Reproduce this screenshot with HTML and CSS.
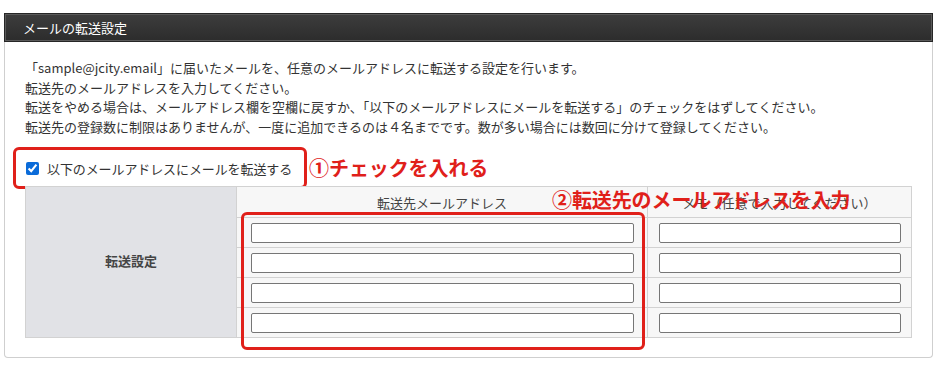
FILE: index.html
```html
<!DOCTYPE html>
<html lang="ja">
<head>
<meta charset="utf-8">
<title>メールの転送設定</title>
<link rel="stylesheet" href="styles.css">
</head>
<body>
<div class="page">
  <section class="panel">
    <div class="panel-head">メールの転送設定</div>
    <div class="panel-body">
      <p class="intro">「sample@jcity.email」に届いたメールを、任意のメールアドレスに転送する設定を行います。<br>転送先のメールアドレスを入力してください。<br>転送をやめる場合は、メールアドレス欄を空欄に戻すか、「以下のメールアドレスにメールを転送する」のチェックをはずしてください。<br>転送先の登録数に制限はありませんが、一度に追加できるのは４名までです。数が多い場合には数回に分けて登録してください。</p>
      <div class="check-row">
        <label class="check-frame"><input type="checkbox" class="check" checked><span>以下のメールアドレスにメールを転送する</span></label>
        <span class="note">①チェックを入れる</span>
      </div>
      <div class="table-wrap">
        <table class="fwd">
          <tr>
            <th class="side" rowspan="5">転送設定</th>
            <td class="head">転送先メールアドレス</td>
            <td class="head">メモ（任意で入力してください）</td>
          </tr>
          <tr><td class="c2"><input class="field" type="text"></td><td class="c3"><input class="field" type="text"></td></tr>
          <tr><td class="c2"><input class="field" type="text"></td><td class="c3"><input class="field" type="text"></td></tr>
          <tr><td class="c2"><input class="field" type="text"></td><td class="c3"><input class="field" type="text"></td></tr>
          <tr><td class="c2"><input class="field" type="text"></td><td class="c3"><input class="field" type="text"></td></tr>
        </table>
        <div class="mark-box"></div>
        <span class="note note-2">②転送先のメールアドレスを入力</span>
      </div>
    </div>
  </section>
</div>
</body>
</html>
```
FILE: styles.css
```css
* { box-sizing: border-box; }
html, body { margin: 0; background: #fff; }
body {
  font-family: "Noto Sans CJK JP", "Noto Sans", sans-serif;
  font-size: 13px;
  color: #333;
}
.page { padding: 13px 15px 0 4px; }
.panel { width: 929px; }
.panel-head {
  height: 29px;
  line-height: 27px;
  padding-left: 18px;
  color: #fff;
  font-size: 13px;
  background: linear-gradient(#3d3d3d, #2c2c2c);
  border: 1px solid #262626;
  box-shadow: inset 0 0 0 1px #5a5a5a;
}
.panel-body {
  border: 1px solid #cfcfcf;
  border-top: none;
  border-radius: 0 0 4px 4px;
  padding: 16px 20px 19px 20px;
}
.intro {
  margin: 0;
  line-height: 19.5px;
}
.check-row {
  display: flex;
  align-items: center;
  margin-top: 11px;
}
.check-frame {
  display: flex;
  align-items: center;
  margin-left: -12px;
  height: 42px;
  padding: 0 12px 0 10px;
  border: 3px solid #e0201a;
  border-radius: 6px;
  letter-spacing: -0.1px;
}
.check {
  width: 13px;
  height: 13px;
  margin: 0 8px 0 0;
  accent-color: #0a6bd9;
}
.note {
  color: #e0201a;
  font-weight: bold;
  font-size: 20px;
  line-height: 24px;
  margin-left: 2px;
  letter-spacing: -0.1px;
}
.table-wrap {
  position: relative;
  margin-top: -3px;
}
.fwd {
  width: 887px;
  border-collapse: collapse;
  table-layout: fixed;
}
.fwd th, .fwd td {
  border: 1px solid #d2d2d2;
  padding: 0;
}
.side {
  width: 211px;
  background: #e1e2e6;
  font-weight: bold;
  color: #444;
  padding-bottom: 4px !important;
}
.head {
  height: 31px;
  background: #f7f7f7;
  text-align: center;
  color: #444;
}
.fwd td.head:nth-child(2) { width: 411px; }
.c2, .c3 {
  height: 30px;
  background: #f7f7f7;
}
.c2 { padding: 0 13px 0 14px !important; }
.c3 { padding: 0 10px 0 11px !important; }
.field {
  display: block;
  width: 100%;
  height: 20px;
  border: 1px solid #767676;
  border-radius: 2px;
  background: #fff;
  font: inherit;
}
.mark-box {
  position: absolute;
  left: 216px;
  top: 26px;
  width: 404px;
  height: 138px;
  border: 3px solid #e0201a;
  border-radius: 6px;
  pointer-events: none;
}
.note-2 {
  position: absolute;
  left: 527px;
  top: 2px;
  margin: 0;
}
```
